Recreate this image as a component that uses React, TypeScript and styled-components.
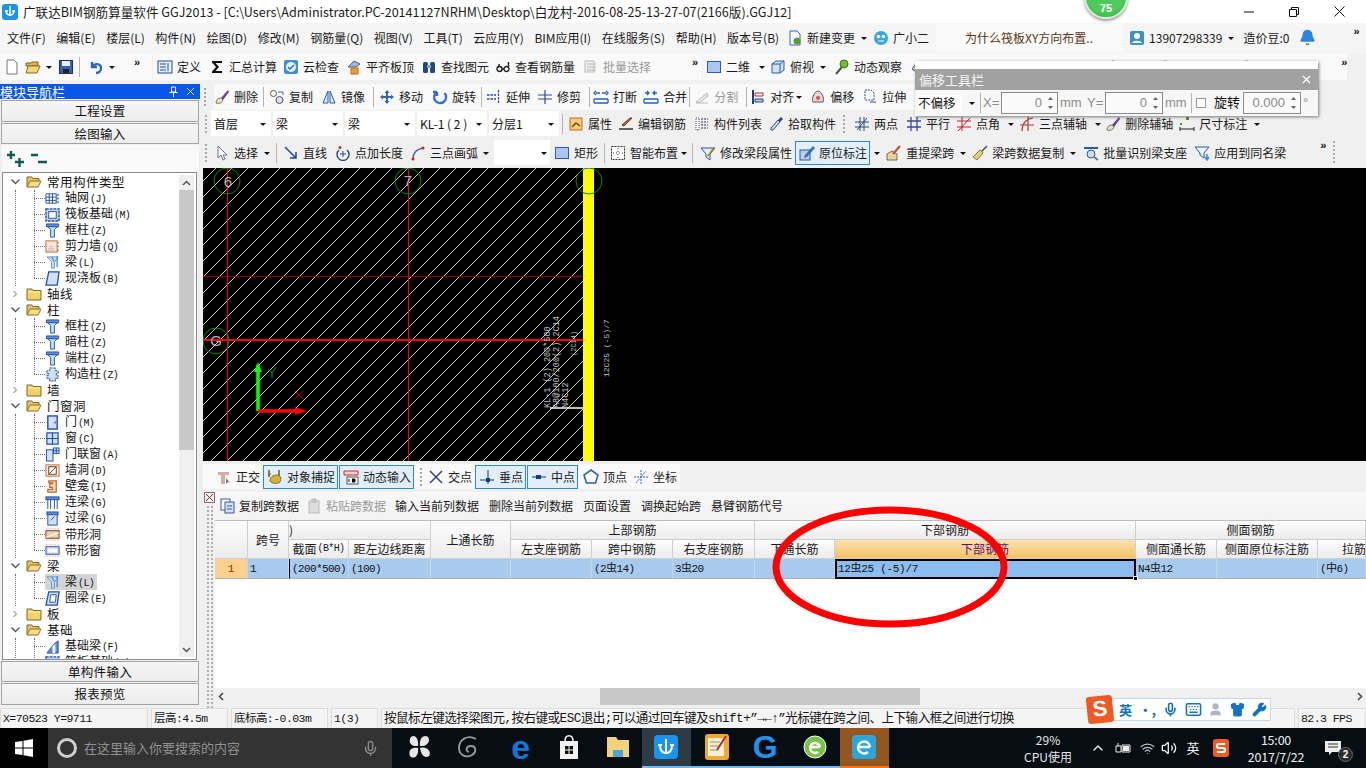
import React from "react";
import styled, { createGlobalStyle } from "styled-components";
import { Mic, Bell, Wifi, Volume2, ChevronUp, X, User, Shirt, Wrench, Keyboard } from "lucide-react";

const Global = createGlobalStyle`
  html, body { margin: 0; padding: 0; background: #f0f0f0; overflow: hidden; }
  * { box-sizing: border-box; }
  body { font-family: "Noto Sans CJK SC", "Liberation Sans", sans-serif; font-size: 12px; color: #111; }
`;

const CJK = `"Noto Sans CJK SC", "Liberation Sans", sans-serif`;
const MONO = `"Liberation Mono", "Noto Sans CJK SC", monospace`;

/* ---------- icons ---------- */
const B = "#1f4fa8", LB = "#cfe0f8", MB = "#5c8fdc", O = "#c8642a", R = "#d4202a", G = "#4e9a2e";
const ICONS: Record<string, React.ReactNode> = {
  newf: <path d="M3 1h7l3 3v11H3z" fill="#fff" stroke="#777" />,
  open: <><path d="M1 4h5l1-1h6v4H1z" fill="#d9b354" stroke="#7a6424" /><path d="M1 14l2-7h12l-3 7z" fill="#f4d67a" stroke="#8a6f28" /></>,
  save: <><rect x="1.5" y="1.5" width="13" height="13" fill="#3c5fb0" stroke="#1d2f70" /><rect x="4" y="2" width="8" height="5" fill="#e8eefa" /><rect x="5" y="10" width="6" height="4" fill="#222" /></>,
  undo: <path d="M4 3v5h5M4 8c2-4 9-4 9 1 0 3-2 5-5 5" fill="none" stroke="#2b68c4" strokeWidth="2.4" />,
  define: <><rect x="1" y="2" width="14" height="12" fill="#e7effb" stroke="#1e4f9c" /><path d="M3 5h6M3 8h6M3 11h6M11 4v8" stroke="#1e4f9c" /></>,
  sigma: <path d="M3 2h10v2H6.500L10 8l-3.500 4H13v2H3v-1.500L7 8 3 3.500z" fill="#111" />,
  cloud: <><rect x="1" y="1" width="14" height="14" rx="2" fill="#3b8fdc" /><circle cx="8" cy="8" r="5" fill="#e9f4ff" /><path d="M5 8l2 2 4-4" fill="none" stroke="#2b6cb8" strokeWidth="1.500" /></>,
  level: <><path d="M2 8l6-6 6 3-4 3z" fill="#9db8d8" stroke="#44648c" /><rect x="5" y="9" width="7" height="6" fill="#e8a02c" stroke={O} /></>,
  find: <><rect x="2" y="3" width="5" height="11" rx="1.500" fill="#26477c" /><rect x="9" y="3" width="5" height="11" rx="1.500" fill="#26477c" /><rect x="6" y="6" width="4" height="3" fill="#8aa2c6" /></>,
  glass: <path d="M2 10a2.500 2.500 0 1 0 5 0 2.500 2.500 0 1 0-5 0M9 10a2.500 2.500 0 1 0 5 0 2.500 2.500 0 1 0-5 0M7 10h2M2.500 9l2-4M13.500 9V3" fill="none" stroke="#222" strokeWidth="1.400" />,
  batch: <><rect x="2" y="2" width="9" height="11" fill="#eee" stroke="#bbb" /><path d="M4 5h9M4 8h9M4 11h9" stroke="#bbb" /></>,
  sq: <rect x="1.500" y="2.500" width="13" height="11" fill="#a9c7f2" stroke="#2d5cab" />,
  cube: <><path d="M2 5l4-3h8v9l-4 3H2z" fill="#cfe3fa" stroke="#2d5cab" /><path d="M2 5h8v9M10 5l4-3" fill="none" stroke="#2d5cab" /></>,
  orbit: <><circle cx="10" cy="5" r="4" fill="#6fc02e" stroke="#3a7a18" /><path d="M8 8l-6 7" stroke="#4a5a30" strokeWidth="2" /></>,
  gemb: <path d="M2 10l6-8 6 8-6 4z" fill="#bcd2ee" stroke="#31598f" />,
  brush: <><path d="M14 1L7 9l2 2 6-8z" fill="#6a3fa0" /><path d="M2 14c0-3 2-5 5-5l2 2c-1 3-4 4-7 3z" fill="#e9e2c8" stroke="#776" /></>,
  copy: <><circle cx="4.500" cy="4.500" r="3" fill="#fff" stroke="#555" /><circle cx="10.500" cy="11" r="3.500" fill="#dde" stroke="#555" /><path d="M9 3h5v3" fill="none" stroke="#3b6fb8" /></>,
  mirror: <path d="M7 2L2 14h5zM9 2l5 12H9z" fill="#dbe8fa" stroke="#2b5aa8" />,
  move: <path d="M8 1l2.500 3H9v3h3V5.500L15 8l-3 2.500V9H9v3h1.500L8 15l-2.500-3H7V9H4v1.500L1 8l3-2.500V7h3V4H5.500z" fill="#3567b4" />,
  rotate: <path d="M12.500 4A6 6 0 1 1 5 3M5 3v4M5 3H1" fill="none" stroke="#2f6cd4" strokeWidth="2.300" />,
  extend: <path d="M12.500 1v14M1 6h9M1 10h9" stroke="#2b4b8e" strokeWidth="1.300" strokeDasharray="2.500 1" fill="none" />,
  trim: <path d="M8 1v14M1 6h14M1 10h14" stroke="#2b4b8e" strokeWidth="1.200" fill="none" />,
  breakf: <path d="M3 4h4M3 2l-2 2 2 2M13 4H9M13 2l2 2-2 2M1 10h14M1 14h14M1 10v4M15 10v4" stroke="#2a62b0" strokeWidth="1.300" fill="none" />,
  merge: <path d="M1 10h14M1 14h14M1 10v4M15 10v4M2 4h4M4 2l2 2-2 2M14 4h-4M12 2l-2 2 2 2" stroke="#2a62b0" strokeWidth="1.300" fill="none" />,
  split: <><path d="M2 13l11-9 1 3-9 7z" fill="#e8e8e8" stroke="#bbb" /><path d="M2 14h12" stroke="#bbb" /></>,
  align: <><path d="M3 1v14" stroke="#1b3c8f" strokeWidth="2" /><path d="M5 4h8v3H5z" fill="#fff" stroke="#b8241e" /><path d="M5 10h8v3H5z" fill="#b9cdec" stroke="#1b3c8f" /></>,
  offset: <><path d="M3 13c-2-4 2-11 5-11s7 7 5 11z" fill="#f2d2c6" stroke="#495e88" /><circle cx="8" cy="9" r="2" fill="#d65a44" /></>,
  stretch: <><path d="M3 1h6l3 3v7H3z" fill="#fff" stroke="#27488a" strokeDasharray="2 1" /><path d="M8 13h6" stroke="#27488a" /></>,
  attr: <><rect x="2" y="2" width="12" height="12" fill="#f6cf7a" stroke={O} /><path d="M4 11l4-4 4 3" stroke="#6c4a10" fill="none" strokeWidth="1.500" /></>,
  editbar: <><path d="M14 2L6 10l-2-1 8-7z" fill="#c86a2a" stroke="#60381a" /><path d="M1 13h14" stroke="#333" strokeWidth="1.500" /></>,
  list: <><rect x="2" y="2" width="3" height="12" fill="#fff" stroke="#446" strokeDasharray="1 1" /><path d="M7 3h7M7 6h7M7 9h7M7 12h7" stroke="#335" strokeDasharray="2 1" /></>,
  dropper: <><path d="M13 1l2 2-3 3-2-2z" fill="#26477c" /><path d="M10 4l2 2-7 8H3v-2z" fill="#cde" stroke="#26477c" /></>,
  twop: <path d="M6 1v14M10 1v14M1 6h14M1 11h14M3 14L13 2" stroke="#2c4a80" strokeWidth="1" fill="none" />,
  para: <path d="M5 1v14M11 1v14M1 5h14M1 11h14" stroke="#3a4a9a" strokeWidth="1.300" fill="none" />,
  angle: <path d="M6 1v14M1 5h14M1 11h14M2 15L14 2" stroke="#c2202a" strokeWidth="1" fill="none" />,
  arc: <path d="M3 15C3 7 7 3 14 2M9 1v14M1 9h14" stroke="#b43a34" strokeWidth="1.200" fill="none" />,
  dim: <><path d="M1 13h14M1 11v4M15 11v4" stroke="#222" fill="none" /><rect x="7" y="1" width="3" height="3" fill={G} /><rect x="1" y="7" width="2" height="2" fill={G} /></>,
  cursor: <path d="M4 1v12l3-3 2 5 2-1-2-4h4z" fill="#fff" stroke="#678" />,
  line: <path d="M2 2l11 11M13 7v6H7" fill="none" stroke="#27488a" strokeWidth="1.500" />,
  plus: <><path d="M12 5a6 6 0 1 1-8 0" fill="none" stroke="#27488a" strokeWidth="1.400" /><path d="M8 6v6M5 9h6" stroke="#27488a" /><circle cx="5" cy="2.500" r="1.500" fill="#b43a34" /></>,
  arc3: <><path d="M3 14C3 8 7 4 13 3" fill="none" stroke="#5a6a8c" strokeWidth="1.500" /><circle cx="3" cy="14" r="1.500" fill="#c2202a" /><circle cx="13" cy="3" r="1.500" fill="#c2202a" /></>,
  smart: <><rect x="1.500" y="1.500" width="13" height="13" fill="#fff" stroke="#333" strokeDasharray="2 1" /><path d="M8 3v10M3 8h10" stroke="#333" strokeDasharray="1 2" /></>,
  funnel: <><path d="M1 3h14L10 9v6l-4-3V9z" fill="#e2edfa" stroke="#2a5b9a" /><path d="M14 3L8 11" stroke="#9a8a22" strokeWidth="2" /></>,
  inplace: <><rect x="1" y="5" width="10" height="10" fill="#b9cfee" stroke="#2a5b9a" /><path d="M14 1L6 10l-1 3 3-1 8-9z" fill="#3b6fb8" /></>,
  refetch: <><path d="M1 15v-6l5-3 5 3v6z" fill="#e5d4a8" stroke="#7a6a3a" /><path d="M14 1L7 9" stroke="#c9502a" strokeWidth="2" /></>,
  broom: <><path d="M15 1l-6 6" stroke="#444" strokeWidth="1.500" /><path d="M1 12l7-7 3 3-6 7z" fill="#e7cf70" stroke="#8a7a2a" /></>,
  recog: <><path d="M1 3h14" stroke="#2a5b9a" strokeWidth="2" /><circle cx="8" cy="9" r="4" fill="#c8dcf4" stroke="#2a5b9a" /><path d="M11 12l4 3" stroke="#777" strokeWidth="2" /></>,
  apply: <><path d="M1 2h14L10 8v5L6 10V8z" fill="#eef3fb" stroke="#2a5b9a" /><path d="M13 9v5M11 12l2 3 2-3" stroke="#3b8fdc" fill="none" strokeWidth="1.500" /></>,
  ortho: <><path d="M2 3h11v3H9v9H5V6H2z" fill="#d9aaa4" /><path d="M10 9v6l2-2 2 1z" fill="#777" /></>,
  snap: <><path d="M2 1v7M12 1v7" stroke="#552" strokeWidth="1.400" /><path d="M3 12c0-4 3-6 7-6 3 0 5 3 3 7-2 2-8 2-10-1z" fill="#d7b23a" stroke="#8a6f20" /><path d="M1 5h3" stroke={R} /></>,
  dyn: <><path d="M1 2h14v4H1z" fill="#f4d9d6" stroke={R} /><rect x="4" y="8" width="11" height="7" fill="#fff" stroke="#555" /><path d="M6 10v3M9 10h3v3H9" stroke="#111" /></>,
  inter: <path d="M2 2l12 12M14 2L2 14" stroke="#27488a" strokeWidth="1.500" />,
  perp: <><path d="M1 11h14" stroke="#2b62b8" strokeWidth="1.300" /><path d="M9 1v14" stroke="#2b62b8" strokeWidth="1.300" /><rect x="7" y="9" width="4" height="4" fill="#143c88" /></>,
  mid: <><path d="M1 8h14" stroke="#2b62b8" strokeWidth="1.300" /><rect x="5" y="6" width="5" height="4" fill="#143c88" /></>,
  vertex: <path d="M8 1l7 5-2.500 8h-9L1 6z" fill="#fff" stroke="#2b62b8" strokeWidth="1.600" />,
  coord: <path d="M8 1v14M1 8h14M3 14L13 2" stroke="#2b62b8" strokeDasharray="2 1" fill="none" />,
  copyd: <><rect x="2" y="1" width="9" height="11" fill="#fff" stroke="#385d9c" /><rect x="6" y="4" width="9" height="11" fill="#d3e2f8" stroke="#385d9c" /><path d="M8 8h5M8 11h5" stroke="#385d9c" /></>,
  pasted: <><rect x="3" y="3" width="10" height="12" fill="#ddd" stroke="#bbb" /><rect x="6" y="1" width="4" height="3" fill="#ccc" stroke="#bbb" /></>,
  newchg: <><path d="M3 1h7l3 3v11H3z" fill="#fff" stroke="#2b62b8" /><circle cx="10" cy="11" r="3.500" fill="#5aa02c" /></>,
  robot: <><circle cx="8" cy="8" r="7" fill="#35a5ea" /><circle cx="5.500" cy="6.500" r="1.800" fill="#fff" /><circle cx="10.500" cy="6.500" r="1.800" fill="#fff" /><path d="M5 11h6" stroke="#fff" /></>,
  userb: <><rect x="1" y="1" width="14" height="14" rx="2" fill="#3b8fd0" /><circle cx="8" cy="6" r="3" fill="#fff" /><path d="M3 13c1-3 9-3 10 0z" fill="#fff" /></>,
  /* tree */
  closed: <><path d="M1 3h5l1 1.500h8V14H1z" fill="#f5d267" stroke="#7d6a2a" /><path d="M2 6h12" stroke="#fff2b8" /></>,
  opened: <><path d="M1 13V3h5l1 1.500h6V7" fill="#e4c463" stroke="#7d6a2a" /><path d="M1 13l3-6h11l-3 6z" fill="#f7dd8a" stroke="#8a6f28" /></>,
  gridi: <><path d="M1 3v10h11V3zM1 6.500h11M1 10h11M4.500 3v10M8 3v10" fill="none" stroke="#1d4fa8" /><rect x="12" y="3" width="3" height="2" fill={MB} /><rect x="12" y="7" width="3" height="2" fill={MB} /><rect x="12" y="11" width="3" height="2" fill={MB} /></>,
  raft: <><rect x="1" y="2" width="14" height="13" fill="#bcd3f2" stroke={B} strokeWidth="1.500" strokeDasharray="3 1" /><rect x="4" y="5" width="8" height="7" fill="#fff" stroke={B} /></>,
  col: <><path d="M1.500 1h13v3h-13z" fill={MB} stroke={B} /><path d="M3 4h10l-3 3v8H6V7z" fill={LB} stroke={B} /></>,
  wall: <><rect x="1" y="2" width="12" height="12" fill="#f3e6da" stroke={O} /><path d="M3 12h8M4 10h6M5 8h4" stroke="#999" strokeDasharray="1 1" /><path d="M13 4h2M13 8h2M13 12h2" stroke={O} /></>,
  beam: <><path d="M2 2h12l-4 6v6H7V7z" fill={LB} stroke={MB} /><path d="M13 1v12M7 2l3 5" stroke={MB} strokeWidth="1.500" /></>,
  slab: <path d="M4 1h11l-2 14H1z" fill={LB} stroke={B} strokeWidth="1.400" />,
  gcol: <path d="M5 1h6v3h3v3h-2v2h2v3h-3v3H5v-3H2V9h2V7H2V4h3z" fill={LB} stroke={B} strokeDasharray="3 1" />,
  door: <><rect x="3" y="1" width="10" height="14" fill={LB} stroke={B} strokeWidth="1.500" /><rect x="10" y="7" width="1.500" height="2" fill={B} /></>,
  win: <><rect x="2" y="2" width="12" height="12" fill={LB} stroke={B} strokeWidth="1.300" /><path d="M8 2v12M2 8h12" stroke={B} strokeWidth="1.300" /></>,
  doorwin: <><rect x="1.500" y="3" width="7" height="12" fill={LB} stroke={B} /><rect x="9" y="1" width="6" height="6" fill={LB} stroke={B} /><path d="M12 1v6M9 4h6" stroke={B} /></>,
  hole: <><rect x="1" y="2" width="14" height="12" fill="#f7eee6" stroke={O} /><rect x="4" y="4" width="8" height="8" fill="#fff" stroke="#6a3a14" /><path d="M4 12l8-8" stroke="#6a3a14" /></>,
  niche: <path d="M4 2h8v12H3v-3h5V9H5V5h3V4H4z" fill="#f2d8bc" stroke={O} strokeWidth="1.300" />,
  lintel: <><rect x="1" y="2" width="14" height="3" fill={MB} stroke={B} /><path d="M3 5v10M6 5v10M10 5v10M13 5v10" stroke={B} /></>,
  guol: <><rect x="2" y="1" width="12" height="3" fill={MB} stroke={B} /><rect x="3" y="4" width="10" height="11" fill={LB} stroke={B} /><path d="M6 10l4-4" stroke={B} /></>,
  sthole: <><rect x="1" y="4" width="14" height="8" fill="#ead2b4" stroke="#6a3a14" /><path d="M1 11l14-5" stroke="#fff" /><path d="M1 2h14M1 14h14" stroke="#f0a8a0" strokeDasharray="2 1" /></>,
  stwin: <><rect x="1" y="4" width="14" height="8" fill={LB} stroke={B} /><rect x="3" y="6" width="10" height="4" fill="#fff" /><path d="M1 2h14M1 14h14" stroke="#f0a8a0" strokeDasharray="2 1" /></>,
  ringb: <><path d="M4 1h11l-2 14H1z" fill={LB} stroke={B} strokeWidth="1.400" /><path d="M6 4h6l-1 8H5z" fill="#fff" stroke={B} /></>,
  fbeam: <><path d="M2 15l8-10 4-3v13z" fill={MB} stroke={B} /><path d="M8 15V8l3-3v10z" fill="#fff" /></>,
};

const IconSvg = styled.svg`
  display: block;
  flex: 0 0 auto;
`;
const Ic = ({ n, s = 16 }: { n: string; s?: number }) => (
  <IconSvg viewBox="0 0 16 16" width={s} height={s}>{ICONS[n]}</IconSvg>
);

/* ---------- page frame ---------- */
const Page = styled.div`
  position: relative;
  width: 1366px;
  height: 768px;
  overflow: hidden;
  display: flex;
  flex-direction: column;
  background: #f0f0f0;
`;

const TitleBar = styled.div`
  height: 23px;
  background: #fff;
  display: flex;
  align-items: center;
  padding-left: 2px;
  gap: 5px;
  flex: 0 0 auto;
`;
const TitleText = styled.span`
  font: 12.6px/23px ${CJK};
  color: #1a1a1a;
  white-space: pre;
`;
const AppMark = styled.span`
  width: 16px;
  height: 16px;
  border-radius: 3px;
  background: #1a93e8;
  display: block;
  flex: 0 0 auto;
  svg { display: block; }
`;
const WinCtrls = styled.div`
  margin-left: auto;
  display: flex;
  align-items: center;
  padding-right: 21px;
  gap: 35px;
  svg { display: block; }
`;

const MenuBar = styled.div`
  height: 31px;
  flex: 0 0 auto;
  background: #f5f5f5;
  display: flex;
  align-items: center;
  padding: 0 0 2px 7px;
  font: 12px/16px ${CJK};
`;
const MenuItem = styled.span<{ $mr?: number; $ink?: string }>`
  margin-right: ${(p) => p.$mr ?? 10.6}px;
  color: ${(p) => p.$ink ?? "#1a1a1a"};
  white-space: nowrap;
`;
const NewsTab = styled.div`
  width: 187px;
  height: 27px;
  margin: 0 6px 0 7px;
  background: #fafafa;
  display: flex;
  align-items: center;
  padding-left: 29px;
  color: #5a3612;
`;
const More = styled.span<{ $ml?: number }>`
  font: bold 11px/11px "Liberation Sans", sans-serif;
  color: #111;
  margin-left: ${(p) => p.$ml ?? 0}px;
  align-self: flex-start;
  padding-top: 3px;
`;

/* ---------- toolbars ---------- */
const ToolRow = styled.div<{ $h: number; $top?: boolean }>`
  height: ${(p) => p.$h}px;
  flex: 0 0 auto;
  display: flex;
  align-items: ${(p) => (p.$top ? "flex-start" : "center")};
  white-space: nowrap;
  overflow: hidden;
`;
const Band = styled.div<{ $w?: number; $pl?: number; $h?: number }>`
  height: ${(p) => p.$h ?? 26}px;
  ${(p) => (p.$w ? `width: ${p.$w}px; flex: 0 0 auto;` : "")}
  padding-left: ${(p) => p.$pl ?? 4}px;
  margin-right: 1px;
  display: flex;
  align-items: center;
  background: #f9f9f9;
`;
const Tool = styled.span<{ $gray?: boolean; $mr?: number; $gap?: number }>`
  display: inline-flex;
  align-items: center;
  gap: ${(p) => p.$gap ?? 4}px;
  margin-right: ${(p) => p.$mr ?? 8}px;
  font: 12px/16px ${CJK};
  color: ${(p) => (p.$gray ? "#9a9a9a" : "#1a1a1a")};
  flex: 0 0 auto;
`;
const OnTool = styled(Tool)`
  height: 24px;
  padding: 0 2px 0 3px;
  margin-right: 1px;
  border: 1px solid #2a8ad4;
  background: #e2effb;
`;
const Caret = styled.i<{ $mr?: number; $ml?: number }>`
  display: block;
  width: 0;
  height: 0;
  flex: 0 0 auto;
  border-left: 3px solid transparent;
  border-right: 3px solid transparent;
  border-top: 3px solid #111;
  margin: 1px ${(p) => p.$mr ?? 9}px 0 ${(p) => p.$ml ?? 0}px;
`;
const Sep = styled.i<{ $mr?: number; $ml?: number }>`
  display: block;
  width: 1px;
  height: 20px;
  background: #b4b4b4;
  flex: 0 0 auto;
  margin: 0 ${(p) => p.$mr ?? 5}px 0 ${(p) => p.$ml ?? 0}px;
`;
const Grip = styled.i<{ $h?: number; $mr?: number; $ml?: number }>`
  display: block;
  width: 2px;
  height: ${(p) => p.$h ?? 18}px;
  flex: 0 0 auto;
  margin: 0 ${(p) => p.$mr ?? 5}px 0 ${(p) => p.$ml ?? 0}px;
  background: repeating-linear-gradient(180deg, #a8a8a8 0 2px, transparent 2px 4px);
`;
const Picker = styled.span<{ $w: number; $mr?: number }>`
  width: ${(p) => p.$w}px;
  height: 25px;
  margin-right: ${(p) => p.$mr ?? 2}px;
  background: #fff;
  display: flex;
  align-items: center;
  padding: 0 3px;
  font: 12px/16px ${CJK};
  flex: 0 0 auto;
  span { flex: 1; }
`;

/* ---------- workspace ---------- */
const Workspace = styled.div`
  flex: 1;
  min-height: 0;
  display: flex;
`;
const Nav = styled.div`
  width: 200px;
  flex: 0 0 auto;
  display: flex;
  flex-direction: column;
  padding-bottom: 3px;
`;
const NavTitle = styled.div`
  height: 15px;
  background: #0a56e6;
  color: #fff;
  font: 13px/15px ${CJK};
  display: flex;
  align-items: center;
  padding-right: 5px;
  flex: 0 0 auto;
  span { flex: 1; }
  svg { display: block; margin-left: 8px; }
`;
const NavBtn = styled.div<{ $h: number }>`
  height: ${(p) => p.$h}px;
  flex: 0 0 auto;
  margin: 1px 1px 0 1px;
  border: 1px solid #a4a4a4;
  background: linear-gradient(#f6f6f6, #ececec);
  font: 12.5px/20px ${CJK};
  text-align: center;
  letter-spacing: 0.3px;
`;
const TreeTools = styled.div`
  height: 27px;
  margin: 1px 1px 0 2px;
  flex: 0 0 auto;
  background: #f9f9f9;
  display: flex;
  align-items: center;
  padding-left: 5px;
  gap: 6px;
`;
const TreeBox = styled.div`
  flex: 1;
  min-height: 0;
  margin: 0 3px 0 2px;
  border: 1px solid #8c8c8c;
  background: #fff;
  display: flex;
  overflow: hidden;
`;
const TreeScroll = styled.div`
  flex: 1;
  overflow: hidden;
  padding-top: 1px;
`;
const VBar = styled.div`
  width: 15px;
  margin: 2px 2px 2px 0;
  flex: 0 0 auto;
  background: #f0f0f0;
  display: flex;
  flex-direction: column;
  align-items: center;
  justify-content: space-between;
  position: relative;
  svg { display: block; }
`;
const VThumb = styled.div`
  width: 15px;
  height: 260px;
  background: #c8c8c8;
  position: absolute;
  top: 15px;
  left: 0;
`;
const BarEnd = styled.span`
  height: 15px;
  display: flex;
  align-items: center;
  position: relative;
`;
const FolderRow = styled.div`
  height: 16px;
  display: flex;
  align-items: center;
  padding-left: 7px;
  font: 12.5px/16px ${CJK};
  white-space: nowrap;
  svg { display: block; }
`;
const Twist = styled.span`
  width: 10px;
  display: flex;
  justify-content: center;
  flex: 0 0 auto;
  margin-right: 6px;
`;
const FolderName = styled.span`
  margin-left: 5px;
  letter-spacing: 0.5px;
`;
const Children = styled.div`
  position: relative;
  margin-left: 12px;
  border-left: 1px dotted #707070;
`;
const ChildInner = styled.div`
  position: relative;
  margin-left: 18px;
  &::before {
    content: "";
    position: absolute;
    left: 0;
    top: 0;
    bottom: 8px;
    border-left: 1px dotted #707070;
  }
`;
const ChildRow = styled.div`
  height: 16px;
  display: flex;
  align-items: center;
  white-space: nowrap;
  &::before {
    content: "";
    width: 11px;
    border-top: 1px dotted #707070;
    flex: 0 0 auto;
  }
`;
const ChildLabel = styled.span<{ $on?: boolean }>`
  display: flex;
  align-items: center;
  height: 16px;
  gap: 5px;
  padding-right: 3px;
  background: ${(p) => (p.$on ? "#d4d4d4" : "transparent")};
  font: 12px/16px ${CJK};
  color: #141414;
`;
const Code = styled.span`
  font: 10px/16px ${MONO};
  margin-left: 1px;
  letter-spacing: -0.6px;
`;

const MainCol = styled.div`
  flex: 1;
  min-width: 0;
  display: flex;
  flex-direction: column;
  padding-left: 3px;
`;
const Canvas = styled.div`
  height: 293px;
  flex: 0 0 auto;
  background: #000;
  svg { display: block; }
`;
const GridPanel = styled.div`
  flex: 1;
  min-height: 0;
  display: flex;
`;
const GripStrip = styled.div`
  width: 12px;
  flex: 0 0 auto;
  padding: 0 0 0 1px;
  display: flex;
  flex-direction: column;
  gap: 2px;
  svg { display: block; }
`;
const GripDots = styled.div`
  flex: 1;
  margin: 0 2px;
  background: radial-gradient(#b0b0b0 1px, transparent 1.2px) 0 0 / 4px 4px;
`;
const GridBody = styled.div`
  flex: 1;
  min-width: 0;
  display: flex;
  flex-direction: column;
`;
const GridTools = styled.div`
  height: 28px;
  flex: 0 0 auto;
  background: linear-gradient(#f8f8f8, #f2f2f2);
  display: flex;
  align-items: center;
  padding-left: 4px;
  white-space: nowrap;
`;
const Sheet = styled.div`
  flex: 1;
  min-height: 0;
  background: #fff;
  border-top: 1px solid #bdbdbd;
  overflow: hidden;
`;
const SheetGrid = styled.div`
  display: grid;
  grid-template-columns: 33px 41px 60px 82px 80px 81px 81px 82px 80px 301px 81px 101px 48px;
  grid-template-rows: 19px 19px 20px;
`;
const HeadCell = styled.div<{ $c: string; $r: string; $hot?: boolean; $clip?: number }>`
  grid-column: ${(p) => p.$c};
  grid-row: ${(p) => p.$r};
  background: ${(p) => (p.$hot ? "linear-gradient(#fbe2ae, #f4c166)" : "linear-gradient(#fcfcfc, #ececec)")};
  color: ${(p) => (p.$hot ? "#5a1080" : "#1a1a1a")};
  border-right: 1px solid #cfcfcf;
  border-bottom: 1px solid #cfcfcf;
  display: flex;
  align-items: center;
  justify-content: ${(p) => (p.$clip !== undefined ? "flex-start" : "center")};
  padding-left: ${(p) => p.$clip ?? 0}px;
  font: 12px/16px ${CJK};
  white-space: nowrap;
  overflow: hidden;
`;
const DataCell = styled.div<{ $c: number; $head?: boolean; $mark?: boolean }>`
  grid-column: ${(p) => p.$c};
  grid-row: 3;
  background: ${(p) => (p.$head ? "#fbd28d" : "#a8caef")};
  color: ${(p) => (p.$head ? "#8a2c10" : "#111")};
  border-right: 1px solid #c3d6ec;
  border-bottom: 1px solid #b0b0b0;
  ${(p) => (p.$mark ? "border-left: 1px solid #000;" : "")}
  padding-left: ${(p) => (p.$head ? 0 : 2)}px;
  font: 11px/20px ${MONO};
  letter-spacing: ${(p) => (p.$head ? 0 : -0.6)}px;
  text-align: ${(p) => (p.$head ? "center" : "left")};
  white-space: nowrap;
  overflow: hidden;
`;
const EditCell = styled.div`
  grid-column: 10;
  grid-row: 3;
  position: relative;
  background: #8dbcee;
  border: 2px solid #000;
  padding-left: 1px;
  font: 11px/16px ${MONO};
  letter-spacing: -0.3px;
  color: #111;
  white-space: nowrap;
`;
const CellHandle = styled.i`
  position: absolute;
  right: -4px;
  bottom: -4px;
  width: 5px;
  height: 5px;
  background: #000;
  border: 1px solid #fff;
`;
const HBar = styled.div`
  height: 17px;
  margin-bottom: 3px;
  flex: 0 0 auto;
  background: #f0f0f0;
  display: flex;
  align-items: center;
  justify-content: space-between;
  position: relative;
  padding: 0 3px;
  svg { display: block; }
`;
const HThumb = styled.div`
  position: absolute;
  left: 385px;
  top: 0;
  width: 320px;
  height: 100%;
  background: #c8c8c8;
`;

/* ---------- status + taskbar ---------- */
const Status = styled.div`
  height: 20px;
  flex: 0 0 auto;
  display: flex;
  align-items: stretch;
  gap: 3px;
`;
const StatusCell = styled.div<{ $w?: number; $wide?: boolean }>`
  ${(p) => (p.$w ? `width: ${p.$w}px; flex: 0 0 auto;` : "flex: 1;")}
  border: 1px solid #dcdcdc;
  border-bottom: none;
  background: #f4f4f4;
  padding-left: 2px;
  font: ${(p) => (p.$wide ? 12.6 : 11.5)}px/20px ${MONO};
  letter-spacing: -0.55px;
  white-space: nowrap;
  overflow: hidden;
  color: #151515;
`;
const Taskbar = styled.div`
  height: 40px;
  flex: 0 0 auto;
  background: #060e14;
  display: flex;
  align-items: stretch;
  color: #fff;
`;
const Start = styled.div`
  width: 48px;
  background: #000;
  display: flex;
  align-items: center;
  justify-content: center;
  svg { display: block; }
`;
const Search = styled.div`
  width: 344px;
  background: #333;
  display: flex;
  align-items: center;
  padding-left: 9px;
  color: #909090;
  font: 13px/16px ${CJK};
  span { margin-left: 7px; flex: 1; }
  svg { margin-right: 13px; display: block; }
`;
const Ring = styled.i`
  width: 20px;
  height: 20px;
  border: 3px solid #cfcfcf;
  border-radius: 50%;
  display: block;
  flex: 0 0 auto;
`;
const Apps = styled.div`
  margin-left: 2px;
  display: flex;
`;
const AppSlot = styled.div<{ $under?: string; $bg?: string; $nudge?: number }>`
  width: 49.5px;
  position: relative;
  display: flex;
  align-items: center;
  justify-content: center;
  padding-left: ${(p) => p.$nudge ?? 0}px;
  background: ${(p) => p.$bg ?? "transparent"};
  border-bottom: 2px solid ${(p) => p.$under ?? "transparent"};
  svg { display: block; }
`;
const AppGlyph = styled.span<{ $ink: string; $size?: number }>`
  font: bold ${(p) => p.$size ?? 30}px/30px "Liberation Sans", sans-serif;
  color: ${(p) => p.$ink};
`;
const Tray = styled.div`
  margin-left: auto;
  display: flex;
  align-items: center;
  padding-right: 17px;
  svg { display: block; }
`;
const CpuBox = styled.div`
  width: 70px;
  margin-right: 3px;
  text-align: center;
  font: 12px/17px ${CJK};
  color: #e8e8e8;
`;
const TrayItem = styled.span<{ $w: number }>`
  width: ${(p) => p.$w}px;
  display: flex;
  justify-content: center;
  font: 13px/16px ${CJK};
  color: #f0f0f0;
`;
const Clock = styled.div`
  width: 76px;
  margin: 0 11px 0 2px;
  text-align: center;
  font: 12.5px/17px ${CJK};
  color: #eee;
  letter-spacing: -0.2px;
`;
const Notif = styled.div`
  position: relative;
  width: 24px;
`;
const NotifBadge = styled.b`
  position: absolute;
  right: -4px;
  bottom: -7px;
  width: 15px;
  height: 15px;
  border-radius: 50%;
  background: #2a2a2a;
  border: 1px solid #666;
  font: bold 10px/13px "Liberation Sans", sans-serif;
  text-align: center;
  color: #fff;
`;

/* ---------- floating ---------- */
const ScoreBall = styled.div`
  position: absolute;
  left: 1084px;
  top: -25px;
  width: 44px;
  height: 44px;
  border-radius: 50%;
  background: radial-gradient(circle at 50% 40%, #4ecb5a 0 60%, #2aa844 100%);
  border: 2px solid #d8e8d8;
  box-shadow: 0 2px 3px rgba(0,0,0,.4);
  color: #fff;
  font: bold 11px/13px "Liberation Sans", sans-serif;
  text-align: center;
  padding-top: 25px;
`;
const OffsetPanel = styled.div`
  position: absolute;
  left: 915px;
  top: 61px;
  width: 403px;
  height: 55px;
  background: #f7f7f7;
  box-shadow: 1px 1px 3px rgba(0,0,0,.5);
  display: flex;
  flex-direction: column;
`;
const OffsetTop = styled.div`
  height: 8px;
  background: #fff;
  flex: 0 0 auto;
`;
const OffsetTitle = styled.div`
  height: 21px;
  background: #a1a1a1;
  color: #f4f4f4;
  font: 13px/21px ${CJK};
  display: flex;
  align-items: center;
  justify-content: space-between;
  padding: 0 5px 0 4px;
  flex: 0 0 auto;
  svg { display: block; }
`;
const OffsetBody = styled.div`
  flex: 1;
  display: flex;
  align-items: center;
  padding-left: 3px;
  font: 12px/16px ${CJK};
`;
const OffPick = styled.span`
  width: 44px;
  background: #fff;
  margin-right: 3px;
  font-size: 12.5px;
`;
const OffLabel = styled.span<{ $ml?: number; $w?: number; $ink?: string }>`
  margin-left: ${(p) => p.$ml ?? 0}px;
  ${(p) => (p.$w ? `width: ${p.$w}px;` : "")}
  color: ${(p) => p.$ink ?? "#8c8c8c"};
  font-family: "Liberation Sans", "Noto Sans CJK SC", sans-serif;
  font-size: 13px;
  flex: 0 0 auto;
`;
const Spin = styled.span<{ $w: number; $ml?: number }>`
  width: ${(p) => p.$w}px;
  height: 22px;
  margin-left: ${(p) => p.$ml ?? 0}px;
  border: 1px solid #8a8a8a;
  background: #fafafa;
  color: #8a8a8a;
  display: flex;
  align-items: center;
  justify-content: flex-end;
  font: 13px/20px "Liberation Sans", sans-serif;
  flex: 0 0 auto;
  svg { display: block; margin-left: 3px; margin-right: 1px; }
`;
const OffCheck = styled.i`
  width: 10px;
  height: 10px;
  border: 1px solid #9a9a9a;
  background: #fff;
  margin: 0 8px 0 4px;
  flex: 0 0 auto;
`;
const ImeBar = styled.div`
  position: absolute;
  left: 1087px;
  top: 696px;
  display: flex;
  align-items: center;
`;
const ImeLogo = styled.div`
  width: 26px;
  height: 27px;
  border-radius: 3px;
  background: #ee5a24;
  color: #fff;
  font: bold 22px/26px "Liberation Sans", sans-serif;
  text-align: center;
  transform: rotate(-6deg);
  position: relative;
  z-index: 1;
`;
const ImePill = styled.div`
  width: 160px;
  height: 23px;
  margin-left: -2px;
  background: #fff;
  border: 1px solid #c6d6e8;
  display: flex;
  align-items: center;
  justify-content: space-between;
  padding: 0 3px 0 7px;
  color: #1272c4;
  font: bold 13px/16px ${CJK};
  svg { display: block; }
`;
const Annotation = styled.svg`
  position: absolute;
  left: 765px;
  top: 500px;
  pointer-events: none;
`;

/* ---------- content helpers ---------- */
const T = ({ i, t, gray, mr, gap }: { i: string; t: string; gray?: boolean; mr?: number; gap?: number }) => (
  <Tool $gray={gray} $mr={mr} $gap={gap}><Ic n={i} />{t}</Tool>
);

type Leaf = [string, string, string?, boolean?];
const Folder = ({ name, open, kids }: { name: string; open?: boolean; kids?: Leaf[] }) => (
  <>
    <FolderRow>
      <Twist>
        <svg width="9" height="6" viewBox="0 0 9 6">
          {open
            ? <path d="M0.500 0.500l4 4 4-4" fill="none" stroke="#555" strokeWidth="1.400" />
            : <path d="M2.500 0l3 3-3 3" fill="none" stroke="#aaa" strokeWidth="1.400" />}
        </svg>
      </Twist>
      <Ic n={open ? "opened" : "closed"} />
      <FolderName>{name}</FolderName>
    </FolderRow>
    {kids && (
      <Children>
        <ChildInner>
          {kids.map(([icon, label, code, on], idx) => (
            <ChildRow key={idx}>
              <ChildLabel $on={on}>
                <Ic n={icon} s={15} />
                <span>{label}{code && <Code>{code}</Code>}</span>
              </ChildLabel>
            </ChildRow>
          ))}
        </ChildInner>
      </Children>
    )}
  </>
);

const Spinner = () => (
  <svg width="11" height="18" viewBox="0 0 11 18">
    <path d="M3 6l2.500-3L8 6z" fill="#666" />
    <path d="M3 12l2.500 3L8 12z" fill="#666" />
  </svg>
);

const WinLogo = ({ s = 18 }: { s?: number }) => (
  <svg width={s} height={s} viewBox="0 0 18 18"><path d="M0 3l7.500-1v6.500H0zM8.500 1.800L18 0v8.500H8.500zM0 9.500h7.500V16L0 15zM8.500 9.500H18V18l-9.500-1.800z" fill="#fff" /></svg>
);

export default function App() {
  return (
    <Page>
      <Global />

      <TitleBar>
        <AppMark>
          <svg width="16" height="16" viewBox="0 0 16 16"><path d="M8 2v10M4 6c0 4 2 5 4 5s4-1 4-5M3 7h3M10 7h3" stroke="#fff" strokeWidth="1.500" fill="none" /></svg>
        </AppMark>
        <TitleText>广联达BIM钢筋算量软件 GGJ2013 - [C:\Users\Administrator.PC-20141127NRHM\Desktop\白龙村-2016-08-25-13-27-07(2166版).GGJ12]</TitleText>
        <WinCtrls>
          <svg width="10" height="10" viewBox="0 0 10 10"><path d="M0 5h10" stroke="#111" /></svg>
          <svg width="10" height="10" viewBox="0 0 10 10"><path d="M0.500 2.500h7v7h-7zM2.500 2.500v-2h7v7h-2" fill="none" stroke="#111" /></svg>
          <svg width="11" height="11" viewBox="0 0 11 11"><path d="M0.500 0.500l10 10M10.500 0.500l-10 10" stroke="#111" /></svg>
        </WinCtrls>
      </TitleBar>

      <MenuBar>
        <MenuItem>文件(F)</MenuItem><MenuItem>编辑(E)</MenuItem><MenuItem>楼层(L)</MenuItem><MenuItem>构件(N)</MenuItem>
        <MenuItem>绘图(D)</MenuItem><MenuItem>修改(M)</MenuItem><MenuItem>钢筋量(Q)</MenuItem><MenuItem>视图(V)</MenuItem>
        <MenuItem>工具(T)</MenuItem><MenuItem>云应用(Y)</MenuItem><MenuItem>BIM应用(I)</MenuItem><MenuItem>在线服务(S)</MenuItem>
        <MenuItem>帮助(H)</MenuItem><MenuItem $mr={8}>版本号(B)</MenuItem>
        <T i="newchg" t="新建变更" mr={6} /><Caret $mr={6} />
        <T i="robot" t="广小二" mr={0} />
        <NewsTab>为什么筏板XY方向布置..</NewsTab>
        <T i="userb" t="13907298339" mr={6} /><Caret $mr={9} />
        <MenuItem $mr={10}>造价豆:0</MenuItem>
        <Bell size={17} fill="#2a84e0" color="#2a84e0" />
        <More $ml={37}>»</More>
      </MenuBar>

      <ToolRow $h={30} $top>
        <Band $w={152}>
          <Ic n="newf" /><Tool $mr={5} /><Ic n="open" /><Caret $ml={5} $mr={6} /><Ic n="save" />
          <Sep $ml={5} $mr={8} /><Ic n="undo" /><Caret $ml={5} $mr={19} /><More>»</More>
        </Band>
        <Band $w={549}>
          <T i="define" t="定义" /><T i="sigma" t="汇总计算" mr={6} /><T i="cloud" t="云检查" mr={7} /><T i="level" t="平齐板顶" mr={7} /><T i="find" t="查找图元" mr={6} />
          <T i="glass" t="查看钢筋量" mr={8} /><T i="batch" t="批量选择" gray /><More $ml={33}>»</More>
        </Band>
        <Band $pl={3}>
          <Tool $mr={3}><Ic n="sq" />二维</Tool><Caret $ml={6} $mr={5} />
          <T i="cube" t="俯视" mr={6} /><Caret $mr={8} />
          <T i="orbit" t="动态观察" mr={8} />
          <T i="gemb" t="局部三维" mr={13} /><T i="glass" t="全屏" mr={13} /><T i="find" t="缩放" mr={13} /><T i="move" t="平移" mr={13} />
          <T i="rotate" t="屏幕旋转" mr={13} /><T i="list" t="选择楼层" mr={0} />
          <More $ml={30}>»</More>
        </Band>
      </ToolRow>

      <Workspace>
        <Nav>
          <NavTitle>
            <span>模块导航栏</span>
            <svg width="9" height="11" viewBox="0 0 9 11"><path d="M2.500 1h4v5h-4zM0.500 6.500h8M4.500 7v4" stroke="#fff" fill="none" /></svg>
            <svg width="9" height="9" viewBox="0 0 9 9"><path d="M1 1l7 7M8 1l-7 7" stroke="#dce6ff" /></svg>
          </NavTitle>
          <NavBtn $h={22}>工程设置</NavBtn>
          <NavBtn $h={21}>绘图输入</NavBtn>
          <TreeTools>
            <svg width="18" height="16" viewBox="0 0 18 16"><path d="M0 4h8M4 0v8M8 11h9M12.500 7v9" stroke="#0b5f58" strokeWidth="2.400" /></svg>
            <svg width="16" height="16" viewBox="0 0 16 16"><path d="M0 4h7M7 11h9" stroke="#0b5f58" strokeWidth="2.400" /></svg>
          </TreeTools>
          <TreeBox>
            <TreeScroll>
              <Folder name="常用构件类型" open kids={[["gridi", "轴网", "(J)"], ["raft", "筏板基础", "(M)"], ["col", "框柱", "(Z)"], ["wall", "剪力墙", "(Q)"], ["beam", "梁", "(L)"], ["slab", "现浇板", "(B)"]]} />
              <Folder name="轴线" />
              <Folder name="柱" open kids={[["col", "框柱", "(Z)"], ["col", "暗柱", "(Z)"], ["col", "端柱", "(Z)"], ["gcol", "构造柱", "(Z)"]]} />
              <Folder name="墙" />
              <Folder name="门窗洞" open kids={[["door", "门", "(M)"], ["win", "窗", "(C)"], ["doorwin", "门联窗", "(A)"], ["hole", "墙洞", "(D)"], ["niche", "壁龛", "(I)"], ["lintel", "连梁", "(G)"], ["guol", "过梁", "(G)"], ["sthole", "带形洞"], ["stwin", "带形窗"]]} />
              <Folder name="梁" open kids={[["beam", "梁", "(L)", true], ["ringb", "圈梁", "(E)"]]} />
              <Folder name="板" />
              <Folder name="基础" open kids={[["fbeam", "基础梁", "(F)"], ["raft", "筏板基础", "(M)"]]} />
            </TreeScroll>
            <VBar>
              <VThumb />
              <BarEnd><svg width="9" height="6" viewBox="0 0 9 6"><path d="M1 5l3.500-3.500L8 5" fill="none" stroke="#555" strokeWidth="1.500" /></svg></BarEnd>
              <BarEnd><svg width="9" height="6" viewBox="0 0 9 6"><path d="M1 1l3.500 3.500L8 1" fill="none" stroke="#555" strokeWidth="1.500" /></svg></BarEnd>
            </VBar>
          </TreeBox>
          <NavBtn $h={21}>单构件输入</NavBtn>
          <NavBtn $h={22}>报表预览</NavBtn>
        </Nav>

        <MainCol>
          <ToolRow $h={26}>
            <Grip $ml={1} $mr={8} />
            <Band $pl={0} $w={704}>
              <T i="brush" t="删除" mr={5} /><Sep />
              <T i="copy" t="复制" /><T i="mirror" t="镜像" /><Sep />
              <T i="move" t="移动" mr={9} /><T i="rotate" t="旋转" mr={5} /><Sep $mr={4} />
              <T i="extend" t="延伸" mr={7} /><T i="trim" t="修剪" /><Sep $mr={3} />
              <T i="breakf" t="打断" mr={6} /><T i="merge" t="合并" mr={2} /><Sep $mr={4} />
              <T i="split" t="分割" gray /><Sep $mr={3} />
              <T i="align" t="对齐" mr={2} /><Caret $mr={8} />
              <T i="offset" t="偏移" /><T i="stretch" t="拉伸" />
            </Band>
          </ToolRow>

          <ToolRow $h={27}>
            <Grip $ml={2} $mr={4} />
            <Picker $w={60}><span>首层</span><Caret $mr={2} /></Picker>
            <Picker $w={70}><span>梁</span><Caret $mr={2} /></Picker>
            <Picker $w={70}><span>梁</span><Caret $mr={2} /></Picker>
            <Picker $w={70}><span>KL-1 ( 2 )</span><Caret $mr={2} /></Picker>
            <Picker $w={70}><span>分层1</span><Caret $mr={2} /></Picker>
            <Sep $ml={1} $mr={5} />
            <T i="attr" t="属性" mr={6} /><T i="editbar" t="编辑钢筋" mr={8} />
            <T i="list" t="构件列表" mr={6} /><T i="dropper" t="拾取构件" mr={7} />
            <Grip $mr={9} />
            <T i="twop" t="两点" /><T i="para" t="平行" mr={6} /><T i="angle" t="点角" /><Caret $mr={5} />
            <T i="arc" t="三点辅轴" /><Caret $mr={4} />
            <T i="brush" t="删除辅轴" mr={6} /><T i="dim" t="尺寸标注" mr={7} /><Caret $mr={0} />
          </ToolRow>

          <ToolRow $h={31}>
            <Grip $ml={2} $mr={7} />
            <T i="cursor" t="选择" mr={6} /><Caret $mr={6} /><Sep $mr={6} />
            <T i="line" t="直线" /><T i="plus" t="点加长度" mr={7} /><T i="arc3" t="三点画弧" mr={5} /><Caret $mr={5} />
            <Picker $w={56} $mr={4}><span /><Caret $mr={0} /></Picker>
            <T i="sq" t="矩形" mr={6} /><Sep $mr={5} />
            <T i="smart" t="智能布置" mr={3} /><Caret $mr={5} /><Sep $mr={7} />
            <T i="funnel" t="修改梁段属性" mr={3} />
            <OnTool><Ic n="inplace" />原位标注</OnTool><Caret $ml={3} $mr={6} />
            <T i="refetch" t="重提梁跨" mr={6} /><Caret $mr={6} />
            <T i="broom" t="梁跨数据复制" mr={6} /><Caret $mr={7} />
            <T i="recog" t="批量识别梁支座" mr={7} /><T i="apply" t="应用到同名梁" mr={34} />
            <More>»</More><Grip $ml={7} $h={24} $mr={0} />
          </ToolRow>

          <Canvas>
            <svg width="1163" height="293" viewBox="203 168 1163 293">
              <defs>
                <pattern id="hatch" patternUnits="userSpaceOnUse" width="16" height="16">
                  <path d="M0 16L16 0" stroke="#cfcfcf" strokeWidth="1" shapeRendering="crispEdges" />
                </pattern>
              </defs>
              <rect x="203" y="168" width="380" height="293" fill="url(#hatch)" />
              <path d="M227.500 168v293M408.500 168v293" stroke="#f00" strokeWidth="1" shapeRendering="crispEdges" />
              <path d="M203 340h380" stroke="#f00" strokeWidth="2" shapeRendering="crispEdges" />
              <path d="M203 276.500h380" stroke="#900000" strokeWidth="1" shapeRendering="crispEdges" />
              <rect x="583" y="168" width="11" height="293" fill="#ff0" />
              <g fill="none" stroke="#0a8a0a">
                <circle cx="227" cy="181" r="13" /><circle cx="408" cy="181" r="13" /><circle cx="589" cy="181" r="13" /><circle cx="216" cy="341" r="13" />
              </g>
              <g fill="#b8b8b8" fontFamily="Liberation Sans" fontSize="15" textAnchor="middle">
                <text x="228" y="187">6</text><text x="408" y="186">7</text><text x="216" y="346">G</text>
              </g>
              <path d="M258 411v-46" stroke="#0f0" strokeWidth="3.600" /><path d="M254 372l4-10 4 10z" fill="#0f0" />
              <path d="M258 411h40" stroke="#f00" strokeWidth="3.600" /><path d="M295 407l12 4-12 4z" fill="#f00" />
              <path d="M268 369l4 4 4-6M272 373v5" stroke="#0d0" fill="none" strokeWidth="0.800" />
              <path d="M295 391l8 8M303 391l-8 8" stroke="#f00" strokeWidth="0.800" />
              <path d="M550 408h33" stroke="#fff" strokeWidth="1.600" />
              <g fill="#c4c4c4" fontFamily="Liberation Mono" fontSize="8.500">
                <text transform="rotate(-90 550 408)" x="550" y="408">KL-1 (2) 200*500</text>
                <text transform="rotate(-90 559 408)" x="559" y="408">A8@100/200(2) 2C14</text>
                <text transform="rotate(-90 568 408)" x="568" y="408">N4C12</text>
                <text transform="rotate(-90 576 356)" x="576" y="356" fontSize="7">(2C14)</text>
                <text transform="rotate(-90 609 377)" x="609" y="377" fontSize="8">12C25 (-5)/7</text>
              </g>
            </svg>
          </Canvas>

          <ToolRow $h={31}>
            <Band $w={477} $pl={13} $h={25}>
              <T i="ortho" t="正交" mr={3} />
              <OnTool><Ic n="snap" />对象捕捉</OnTool>
              <OnTool><Ic n="dyn" />动态输入</OnTool>
              <Grip $ml={5} $mr={6} />
              <T i="inter" t="交点" mr={3} />
              <OnTool><Ic n="perp" />垂点</OnTool>
              <OnTool><Ic n="mid" />中点</OnTool>
              <Tool $mr={4} />
              <T i="vertex" t="顶点" mr={6} /><T i="coord" t="坐标" />
            </Band>
          </ToolRow>

          <GridPanel>
            <GripStrip>
              <svg width="11" height="11" viewBox="0 0 11 11"><rect x="0.500" y="0.500" width="10" height="10" fill="#eee" stroke="#777" /><path d="M2 2l7 7M9 2l-7 7" stroke="#a03030" /></svg>
              <GripDots />
            </GripStrip>
            <GridBody>
              <GridTools>
                <T i="copyd" t="复制跨数据" mr={7} /><T i="pasted" t="粘贴跨数据" gray mr={9} />
                <Tool $mr={10}>输入当前列数据</Tool><Tool $mr={10}>删除当前列数据</Tool><Tool $mr={10}>页面设置</Tool>
                <Tool $mr={10}>调换起始跨</Tool><Tool>悬臂钢筋代号</Tool>
              </GridTools>
              <Sheet>
                <SheetGrid>
                  <HeadCell $c="1" $r="1 / span 2" />
                  <HeadCell $c="2" $r="1 / span 2">跨号</HeadCell>
                  <HeadCell $c="3 / span 2" $r="1" $clip={0}>)</HeadCell>
                  <HeadCell $c="3" $r="2">截面<Code>(B*H)</Code></HeadCell>
                  <HeadCell $c="4" $r="2">距左边线距离</HeadCell>
                  <HeadCell $c="5" $r="1 / span 2">上通长筋</HeadCell>
                  <HeadCell $c="6 / span 3" $r="1">上部钢筋</HeadCell>
                  <HeadCell $c="6" $r="2">左支座钢筋</HeadCell>
                  <HeadCell $c="7" $r="2">跨中钢筋</HeadCell>
                  <HeadCell $c="8" $r="2">右支座钢筋</HeadCell>
                  <HeadCell $c="9 / span 2" $r="1">下部钢筋</HeadCell>
                  <HeadCell $c="9" $r="2">下通长筋</HeadCell>
                  <HeadCell $c="10" $r="2" $hot>下部钢筋</HeadCell>
                  <HeadCell $c="11 / span 3" $r="1">侧面钢筋</HeadCell>
                  <HeadCell $c="11" $r="2">侧面通长筋</HeadCell>
                  <HeadCell $c="12" $r="2">侧面原位标注筋</HeadCell>
                  <HeadCell $c="13" $r="2" $clip={24}>拉筋</HeadCell>
                  <DataCell $c={1} $head>1</DataCell>
                  <DataCell $c={2}>1</DataCell>
                  <DataCell $c={3} $mark>(200*500)</DataCell>
                  <DataCell $c={4}>(100)</DataCell>
                  <DataCell $c={5} />
                  <DataCell $c={6} />
                  <DataCell $c={7}>(2虫14)</DataCell>
                  <DataCell $c={8}>3虫20</DataCell>
                  <DataCell $c={9} />
                  <EditCell>12虫25 (-5)/7<CellHandle /></EditCell>
                  <DataCell $c={11}>N4虫12</DataCell>
                  <DataCell $c={12} />
                  <DataCell $c={13}>(中6)</DataCell>
                </SheetGrid>
              </Sheet>
              <HBar>
                <HThumb />
                <svg width="6" height="9" viewBox="0 0 6 9"><path d="M5 1L1.500 4.500 5 8" fill="none" stroke="#444" strokeWidth="1.500" /></svg>
                <svg width="6" height="9" viewBox="0 0 6 9"><path d="M1 1l3.500 3.500L1 8" fill="none" stroke="#444" strokeWidth="1.500" /></svg>
              </HBar>
            </GridBody>
          </GridPanel>
        </MainCol>
      </Workspace>

      <Status>
        <StatusCell $w={148}>X=70523 Y=9711</StatusCell>
        <StatusCell $w={77}>层高:4.5m</StatusCell>
        <StatusCell $w={97}>底标高:-0.03m</StatusCell>
        <StatusCell $w={47}>1(3)</StatusCell>
        <StatusCell $wide>按鼠标左键选择梁图元,按右键或ESC退出;可以通过回车键及shift+”→←↑”光标键在跨之间、上下输入框之间进行切换</StatusCell>
        <StatusCell $w={68}>82.3 FPS</StatusCell>
      </Status>

      <Taskbar>
        <Start><WinLogo /></Start>
        <Search>
          <Ring />
          <span>在这里输入你要搜索的内容</span>
          <Mic size={17} color="#8a8a8a" />
        </Search>
        <Apps>
          <AppSlot>
            <svg width="24" height="26" viewBox="0 0 24 26"><path d="M11 12C3 13 1 7 4 3c4-3 8 2 7 9zM13 12C12 4 17 0 21 3c3 4-1 10-8 9zM11 14c-7-1-10 3-8 8 4 4 9 0 8-8zM13 14c1 7 5 11 9 8 3-4-2-10-9-8z" fill="#e6e6e6" /></svg>
          </AppSlot>
          <AppSlot>
            <svg width="22" height="24" viewBox="0 0 22 24"><path d="M19 4C10-1 2 5 2 13s8 10 13 7 4-9-1-9-6 5-2 6" fill="none" stroke="#9a9a9a" strokeWidth="1.800" /></svg>
          </AppSlot>
          <AppSlot $nudge={6}><AppGlyph $ink="#1277d6" $size={34}>e</AppGlyph></AppSlot>
          <AppSlot $nudge={4}>
            <svg width="22" height="26" viewBox="0 0 22 26"><path d="M2 7h18v18H2z" fill="#f4f4f4" /><path d="M7 7c0-7 8-7 8 0" fill="none" stroke="#f4f4f4" strokeWidth="1.500" /><path d="M7 12h3.500v3.500H7zM11.500 12H15v3.500h-3.500zM7 16.500h3.500V20H7zM11.500 16.500H15V20h-3.500z" fill="#111" /></svg>
          </AppSlot>
          <AppSlot $nudge={3}>
            <svg width="24" height="22" viewBox="0 0 24 22"><path d="M1 1h9l2 3h11v17H1z" fill="#f2d27a" /><path d="M7 14h10v7H7z" fill="#4ba5dc" /></svg>
          </AppSlot>
          <AppSlot $bg="#2f3b44" $under="#76b9ed">
            <svg width="24" height="24" viewBox="0 0 24 24"><rect width="24" height="24" rx="4" fill="#1a93e8" /><path d="M12 4v14M6 10c0 6 3 8 6 8s6-2 6-8M4 10h4M16 10h4" stroke="#fff" strokeWidth="2" fill="none" /></svg>
          </AppSlot>
          <AppSlot $under="#76b9ed" $nudge={3}>
            <svg width="24" height="26" viewBox="0 0 24 26"><rect width="24" height="26" rx="3" fill="#f0a832" /><rect x="3" y="4" width="16" height="18" fill="#f6efd8" /><path d="M5 8h10M5 12h10M5 16h8" stroke="#b58c4a" /><path d="M21 2L12 16" stroke="#a33" strokeWidth="2" /></svg>
          </AppSlot>
          <AppSlot $under="#76b9ed"><AppGlyph $ink="#2090e8" $size={32}>G</AppGlyph></AppSlot>
          <AppSlot $under="#76b9ed">
            <svg width="24" height="26" viewBox="0 0 24 26"><circle cx="12" cy="13" r="11" fill="#76c442" stroke="#fff" /><path d="M6 13h11M17 13a5 5 0 1 0-2 5" fill="none" stroke="#fff" strokeWidth="2.400" /></svg>
          </AppSlot>
          <AppSlot $bg="#94561f" $under="#f07a10">
            <svg width="24" height="26" viewBox="0 0 24 26"><rect y="1" width="24" height="24" rx="4" fill="#2aa6d8" /><path d="M6 13h12M18 13a6 6 0 1 0-2 5" fill="none" stroke="#fff" strokeWidth="2.400" /></svg>
          </AppSlot>
        </Apps>
        <Tray>
          <CpuBox>29%<br />CPU使用</CpuBox>
          <TrayItem $w={24}><ChevronUp size={16} color="#eee" /></TrayItem>
          <TrayItem $w={26}>
            <svg width="16" height="14" viewBox="0 0 16 14"><path d="M3 2v3M1 5h5v6H1zM7 4h8v7H7z" fill="none" stroke="#eee" /><rect x="8" y="5" width="6" height="5" fill="#eee" /></svg>
          </TrayItem>
          <TrayItem $w={22}><Wifi size={15} color="#bbb" /></TrayItem>
          <TrayItem $w={22}><Volume2 size={16} color="#eee" /></TrayItem>
          <TrayItem $w={26}>英</TrayItem>
          <TrayItem $w={30}>
            <svg width="16" height="18" viewBox="0 0 16 18"><rect width="16" height="18" rx="3" fill="#ee5a24" /><path d="M12 5H6a2 2 0 0 0 0 4h4a2 2 0 0 1 0 4H4" fill="none" stroke="#fff" strokeWidth="2.200" /></svg>
          </TrayItem>
          <Clock>15:00<br />2017/7/22</Clock>
          <Notif>
            <svg width="16" height="14" viewBox="0 0 16 14"><path d="M0 0h16v11h-9l-3 3v-3H0z" fill="#eee" /><path d="M3 3h10M3 6h10" stroke="#333" /></svg>
            <NotifBadge>2</NotifBadge>
          </Notif>
        </Tray>
      </Taskbar>

      <ScoreBall>75</ScoreBall>

      <OffsetPanel>
        <OffsetTop />
        <OffsetTitle>偏移工具栏<X size={13} color="#fff" strokeWidth={2.200} /></OffsetTitle>
        <OffsetBody>
          <OffPick>不偏移</OffPick>
          <Caret $ml={4} $mr={5} />
          <Sep $mr={2} />
          <OffLabel $w={18}>X=</OffLabel>
          <Spin $w={57}>0<Spinner /></Spin>
          <OffLabel $ml={2} $w={27}>mm</OffLabel>
          <OffLabel $w={18}>Y=</OffLabel>
          <Spin $w={58}>0<Spinner /></Spin>
          <OffLabel $ml={2} $w={26}>mm</OffLabel>
          <Sep $mr={0} />
          <OffCheck />
          <OffLabel $w={29} $ink="#111">旋转</OffLabel>
          <Spin $w={58}>0.000<Spinner /></Spin>
          <OffLabel $ml={2}>°</OffLabel>
        </OffsetBody>
      </OffsetPanel>

      <ImeBar>
        <ImeLogo>S</ImeLogo>
        <ImePill>
          <span>英</span>
          <span>•,</span>
          <Mic size={15} strokeWidth={2.600} />
          <Keyboard size={17} strokeWidth={2.200} />
          <User size={15} color="#a8b8c8" fill="#a8b8c8" />
          <Shirt size={15} fill="#1272c4" />
          <Wrench size={15} fill="#1272c4" />
        </ImePill>
      </ImeBar>

      <Annotation width="260" height="140" viewBox="765 500 260 140">
        <ellipse cx="890" cy="567" rx="114" ry="57" fill="none" stroke="#f00" strokeWidth="7" />
      </Annotation>
    </Page>
  );
}
